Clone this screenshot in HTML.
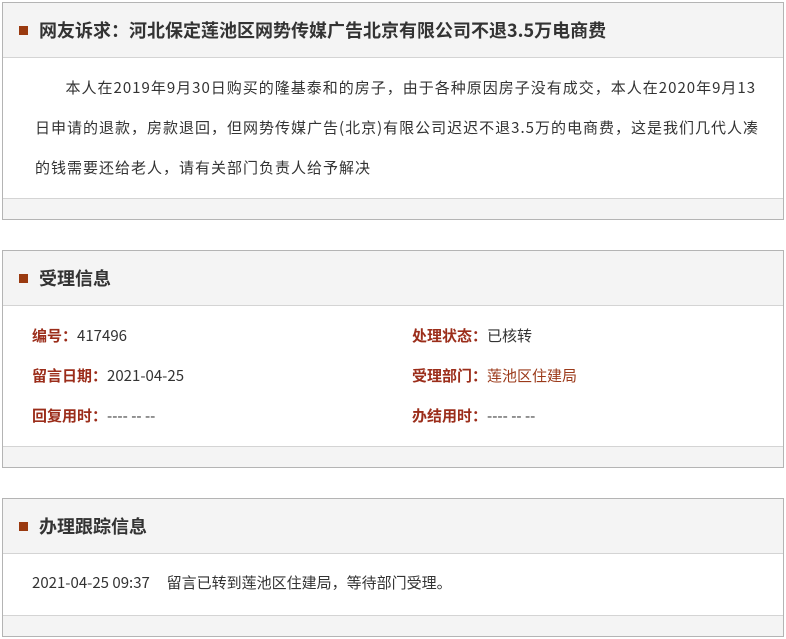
<!DOCTYPE html>
<html><head><meta charset="utf-8"><style>
body{margin:0;background:#fff;font-family:"Noto Sans CJK SC","Liberation Sans",sans-serif;color:#333;}
.box{position:absolute;left:2px;width:780px;border:1px solid #b4b4b4;background:#fff;}
.hd{height:54px;background:#f4f4f4;border-bottom:1px solid #d4d4d4;position:relative;}
.hd i{position:absolute;left:16px;top:23px;width:9px;height:9px;background:#9a3a10;}
.hd>span{position:absolute;left:36px;top:15px;font-size:18px;font-weight:bold;color:#333;line-height:24px;white-space:nowrap;}
.c{display:inline-block;width:1em;text-align:center;}
.ft{height:20px;background:#f4f4f4;border-top:1px solid #d4d4d4;}
.txt{font-size:15px;line-height:40px;padding:10px 10px 0 32px;height:130px;overflow:hidden;letter-spacing:1px;white-space:nowrap;}
.info{position:relative;height:140px;font-size:15px;}
.info div{position:absolute;line-height:20px;}
.l{color:#9b2d1a;font-weight:bold;}
.o{color:#9b3a1a;}
</style></head><body>
<div class="box" style="top:2px;">
<div class="hd"><i></i><span>网友诉求<span class="c">：</span>河北保定莲池区网势传媒广告北京有限公司不退3.5万电商费</span></div>
<div class="txt">&nbsp;&nbsp;&nbsp;&nbsp;&nbsp;&nbsp;&nbsp;本人在2019年9月30日购买的隆基泰和的房子，由于各种原因房子没有成交，本人在2020年9月13<br>日申请的退款，房款退回，但网势传媒广告(北京)有限公司迟迟不退3.5万的电商费，这是我们几代人凑<br>的钱需要还给老人，请有关部门负责人给予解决</div>
<div class="ft"></div>
</div>
<div class="box" style="top:250px;">
<div class="hd"><i></i><span>受理信息</span></div>
<div class="info">
<div style="left:29px;top:20px"><span class="l">编号<span class="c">：</span></span>417496</div>
<div style="left:409px;top:20px"><span class="l">处理状态<span class="c">：</span></span>已核转</div>
<div style="left:29px;top:60px"><span class="l">留言日期<span class="c">：</span></span>2021-04-25</div>
<div style="left:409px;top:60px"><span class="l">受理部门<span class="c">：</span></span><span class="o">莲池区住建局</span></div>
<div style="left:29px;top:100px"><span class="l">回复用时<span class="c">：</span></span>---- -- --</div>
<div style="left:409px;top:100px"><span class="l">办结用时<span class="c">：</span></span>---- -- --</div>
</div>
<div class="ft"></div>
</div>
<div class="box" style="top:498px;">
<div class="hd"><i></i><span>办理跟踪信息</span></div>
<div style="height:61px;position:relative;font-size:15px"><div style="position:absolute;left:29px;top:19px;line-height:20px">2021-04-25 09:37&nbsp;&nbsp;&nbsp;&nbsp;&nbsp;留言已转到莲池区住建局，等待部门受理。</div></div>
<div class="ft"></div>
</div>
</body></html>
